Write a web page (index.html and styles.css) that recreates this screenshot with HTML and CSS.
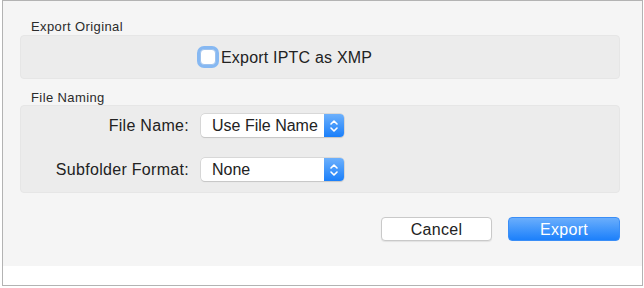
FILE: index.html
```html
<!DOCTYPE html>
<html lang="en">
<head>
    <meta charset="UTF-8">
    <title>Export</title>
    <link rel="stylesheet" href="styles.css">
</head>
<body>

    <div class="dialog">
        <div class="content">

            <!-- Export Original -->
            <div class="group-label">Export Original</div>
            <div class="group group-original">
                <label class="check">
                    <span class="check-box"></span>
                    <span class="check-text">Export IPTC as XMP</span>
                </label>
            </div>

            <!-- File Naming -->
            <div class="group-label label-naming">File Naming</div>
            <div class="group group-naming">
                <div class="field-label">File Name:</div>
                <div class="popup">
                    <span class="popup-text">Use File Name</span>
                    <span class="popup-arrows">
                        <svg width="10" height="16" viewBox="0 0 10 16">
                            <path d="M2 6 L5 3 L8 6 M2 10 L5 13 L8 10" fill="none" stroke="#fff" stroke-width="1.6" stroke-linecap="round" stroke-linejoin="round"/>
                        </svg>
                    </span>
                </div>

                <div class="field-label">Subfolder Format:</div>
                <div class="popup">
                    <span class="popup-text">None</span>
                    <span class="popup-arrows">
                        <svg width="10" height="16" viewBox="0 0 10 16">
                            <path d="M2 6 L5 3 L8 6 M2 10 L5 13 L8 10" fill="none" stroke="#fff" stroke-width="1.6" stroke-linecap="round" stroke-linejoin="round"/>
                        </svg>
                    </span>
                </div>
            </div>

            <!-- Buttons -->
            <div class="buttons">
                <button class="btn btn-cancel">Cancel</button>
                <button class="btn btn-export">Export</button>
            </div>

        </div>
    </div>

</body>
</html>
```

FILE: styles.css
```css
/* styles.css */

body {
    font-family: "Liberation Sans", Arial, sans-serif;
    background-color: #fff;
    margin: 0;
    padding: 0;
    color: #262626;
}

/* Dialog frame */
.dialog {
    margin-left: 2px;
    width: 639px;
    height: 284px;
    border: 1px solid #b3b3b3;
    background: #fff;
}

.content {
    height: 265px;
    background: #f5f5f5;
    padding: 18px 22px 0 17px;
    box-sizing: border-box;
}

.group-label {
    font-size: 13px;
    letter-spacing: 0.4px;
    line-height: 15px;
    padding-left: 11px;
    margin-bottom: 1px;
    color: #2b2b2b;
}

.label-naming {
    margin-top: 11px;
    margin-bottom: 0;
}

.group {
    background: #ececec;
    border: 1px solid #e6e6e6;
    border-radius: 4px;
}

/* Checkbox row */
.group-original {
    height: 42px;
    display: flex;
    align-items: center;
    padding-left: 179px;
}

.check {
    display: flex;
    align-items: center;
}

.check-box {
    width: 16px;
    height: 16px;
    background: #fff;
    border: 1px solid #9fc3ee;
    border-radius: 4px;
    box-sizing: border-box;
    box-shadow: 0 0 0 3px #86b8f2;
}

.check-text {
    font-size: 16px;
    letter-spacing: 0.2px;
    margin-left: 5px;
    padding-top: 2px;
    color: #222;
}

/* Popup rows */
.group-naming {
    display: grid;
    grid-template-columns: 168px 143px;
    column-gap: 12px;
    row-gap: 21px;
    align-items: center;
    padding: 8px 0 11px 0;
}

.field-label {
    font-size: 16px;
    letter-spacing: 0.3px;
    text-align: right;
    color: #222;
}

.popup {
    height: 23px;
    display: flex;
    align-items: center;
    justify-content: space-between;
    background: #fff;
    border-radius: 4px;
    box-shadow: 0 0 0 0.5px #c4c4c4, 0 1px 1px rgba(0, 0, 0, 0.15);
}

.popup-text {
    font-size: 16px;
    padding-left: 11px;
    color: #222;
}

.popup-arrows {
    width: 20px;
    height: 23px;
    display: flex;
    align-items: center;
    justify-content: center;
    background: linear-gradient(#6cb0fc, #1a7ffa);
    border-radius: 0 4px 4px 0;
}

/* Buttons */
.buttons {
    display: flex;
    justify-content: flex-end;
    gap: 16px;
    margin-top: 24px;
}

.btn {
    font-family: "Liberation Sans", Arial, sans-serif;
    font-size: 16px;
    letter-spacing: 0.3px;
    height: 24px;
    padding: 1px 0 0 0;
    border-radius: 4px;
}

.btn-cancel {
    width: 111px;
    background: #fff;
    color: #222;
    border: 1px solid #c9c9c9;
    box-shadow: 0 1px 1px rgba(0, 0, 0, 0.08);
}

.btn-export {
    width: 112px;
    color: #fff;
    background: linear-gradient(#6aaefc, #1c80fb);
    border: 1px solid #3a8ef7;
}
```
